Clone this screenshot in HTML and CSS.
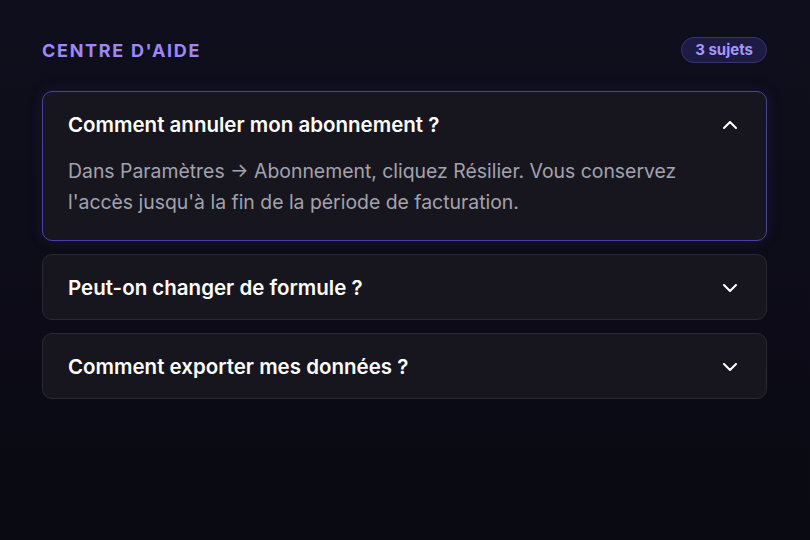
FILE: index.html
```html
<!DOCTYPE html>
<html lang="fr">
<head>
    <meta charset="UTF-8">
    <meta name="viewport" content="width=device-width, initial-scale=1.0">
    <title>Centre d'aide</title>
    <link rel="stylesheet" href="styles.css">
</head>
<body>

<div class="container">
    <div class="header">
        <h1>Centre d'aide</h1>
        <span class="badge">3 sujets</span>
    </div>

    <div class="faq">
        <div class="item open">
            <div class="question">
                <span>Comment annuler mon abonnement ?</span>
                <svg class="chevron" width="14" height="8" viewBox="0 0 14 8"><polyline points="1,7 7,1 13,7"/></svg>
            </div>
            <p class="answer">Dans Paramètres → Abonnement, cliquez Résilier. Vous conservez l'accès jusqu'à la fin de la période de facturation.</p>
        </div>
        <div class="item">
            <div class="question">
                <span>Peut-on changer de formule ?</span>
                <svg class="chevron" width="14" height="8" viewBox="0 0 14 8"><polyline points="1,1 7,7 13,1"/></svg>
            </div>
        </div>
        <div class="item">
            <div class="question">
                <span>Comment exporter mes données ?</span>
                <svg class="chevron" width="14" height="8" viewBox="0 0 14 8"><polyline points="1,1 7,7 13,1"/></svg>
            </div>
        </div>
    </div>
</div>

</body>
</html>
```

FILE: styles.css
```css
html, body {
    height: 100%;
}
body {
    margin: 0;
    font-family: Inter, "Noto Sans", sans-serif;
    background: linear-gradient(180deg, #0f0e1c 0%, #0c0b17 60%, #0a0a12 100%);
    color: #fff;
}
.container {
    padding: 37px 43px 0 42px;
}
.header {
    display: flex;
    justify-content: space-between;
    align-items: center;
    margin-bottom: 28px;
}
.header h1 {
    margin: 0;
    font-size: 18px;
    font-weight: 700;
    letter-spacing: 1.7px;
    text-transform: uppercase;
    color: #9d88f7;
}
.badge {
    font-size: 15px;
    font-weight: 700;
    color: #a796ff;
    background: #1d1a45;
    border: 1px solid #3a336e;
    border-radius: 13px;
    padding: 3px 13px;
    line-height: 18px;
}
.faq {
    display: flex;
    flex-direction: column;
    gap: 13px;
}
.item {
    background: #17161f;
    border: 1px solid #2a2834;
    border-radius: 10px;
}
.item.open {
    border-color: #4b41a3;
    box-shadow: 0 0 16px rgba(90, 70, 200, 0.15);
}
.question {
    display: flex;
    justify-content: space-between;
    align-items: center;
    padding: 21px 25px 19px;
    font-size: 20.5px;
    font-weight: 600;
    line-height: 24px;
}
.chevron {
    margin-right: 4px;
    fill: none;
    stroke: #fff;
    stroke-width: 2;
    stroke-linecap: round;
    stroke-linejoin: round;
}
.answer {
    margin: 0;
    padding: 0 60px 22px 25px;
    font-size: 19.4px;
    line-height: 31px;
    color: #a3a3ad;
}
```
